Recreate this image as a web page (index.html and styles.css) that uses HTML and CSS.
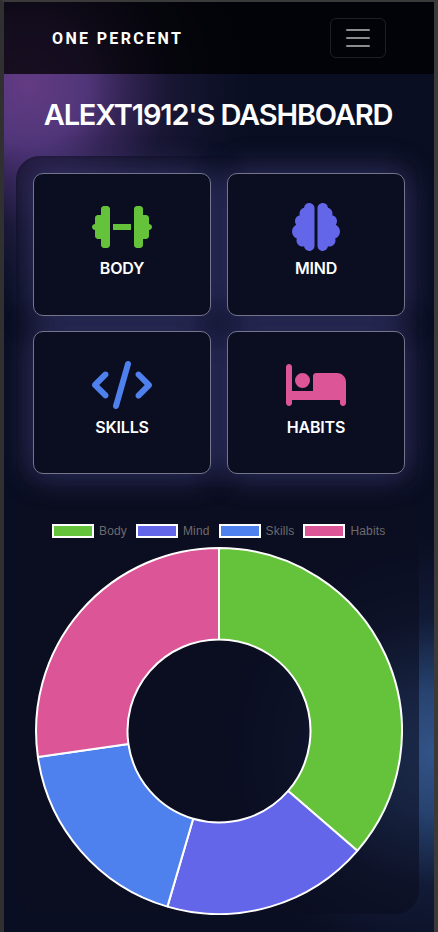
FILE: index.html
```html
<!DOCTYPE html>
<html lang="en">
<head>
<meta charset="utf-8">
<meta name="viewport" content="width=device-width, initial-scale=1">
<title>One Percent</title>
<link rel="stylesheet" href="styles.css">
</head>
<body>
<div class="app">
  <nav class="navbar">
    <a class="brand">ONE PERCENT</a>
    <button class="toggler" aria-label="Menu"><svg width="30" height="30" viewBox="0 0 30 30"><path d="M4 7h22M4 15h22M4 23h22" stroke="currentColor" stroke-width="2" stroke-linecap="round"/></svg></button>
  </nav>
  <h1 class="title">ALEXT1912'S DASHBOARD</h1>
  <section class="panel cards">
    <a class="card body"><svg class="icon" viewBox="0 0 640 512"><path d="M96 64c0-17.7 14.3-32 32-32h32c17.7 0 32 14.3 32 32V448c0 17.7-14.3 32-32 32H128c-17.7 0-32-14.3-32-32V384H64c-17.7 0-32-14.3-32-32V288c-17.700 0-32-14.300-32-32s14.300-32 32-32V160c0-17.700 14.300-32 32-32H96V64zm448 0v64h32c17.700 0 32 14.300 32 32v64c17.700 0 32 14.300 32 32s-14.300 32-32 32v64c0 17.700-14.300 32-32 32H544v64c0 17.700-14.300 32-32 32H480c-17.700 0-32-14.300-32-32V64c0-17.700 14.300-32 32-32h32c17.700 0 32 14.300 32 32zM416 224v64H224V224H416z"/></svg><span>BODY</span></a>
    <a class="card mind"><svg class="icon" viewBox="0 0 512 512"><path d="M184 0c30.900 0 56 25.100 56 56V456c0 30.900-25.100 56-56 56c-28.900 0-52.700-21.900-55.700-50.100c-5.200 1.400-10.700 2.100-16.300 2.100c-35.300 0-64-28.700-64-64c0-7.400 1.300-14.600 3.600-21.200C21.400 367.400 0 338.200 0 304c0-31.900 18.700-59.500 45.800-72.300C37.100 220.800 32 207 32 192c0-30.700 21.600-56.300 50.400-62.600C80.800 123.900 80 118 80 112c0-29.900 20.600-55.100 48.300-62.100C131.300 21.900 155.100 0 184 0zM328 0c28.900 0 52.600 21.900 55.700 49.900c27.800 7 48.300 32.100 48.300 62.100c0 6-.8 11.900-2.400 17.400c28.800 6.200 50.400 31.900 50.400 62.600c0 15-5.100 28.800-13.800 39.700C493.300 244.500 512 272.100 512 304c0 34.200-21.400 63.400-51.600 74.800c2.300 6.600 3.600 13.800 3.600 21.200c0 35.300-28.700 64-64 64c-5.600 0-11.100-.7-16.300-2.100c-3 28.200-26.800 50.100-55.700 50.100c-30.900 0-56-25.100-56-56V56c0-30.900 25.100-56 56-56z"/></svg><span>MIND</span></a>
    <a class="card skills"><svg class="icon" viewBox="0 0 640 512"><path d="M392.800 1.200c-17-4.900-34.700 5-39.600 22l-128 448c-4.900 17 5 34.700 22 39.600s34.700-5 39.600-22l128-448c4.900-17-5-34.700-22-39.600zm80.600 120.100c-12.500 12.500-12.500 32.800 0 45.300L562.700 256l-89.400 89.400c-12.500 12.500-12.500 32.800 0 45.300s32.800 12.500 45.300 0l112-112c12.500-12.500 12.500-32.800 0-45.300l-112-112c-12.500-12.500-32.800-12.500-45.300 0zm-306.700 0c-12.500-12.500-32.800-12.500-45.300 0l-112 112c-12.500 12.500-12.500 32.800 0 45.300l112 112c12.500 12.500 32.800 12.500 45.300 0s12.500-32.800 0-45.300L77.300 256l89.400-89.400c12.500-12.500 12.500-32.800 0-45.300z"/></svg><span>SKILLS</span></a>
    <a class="card habits"><svg class="icon" viewBox="0 0 640 512"><path d="M32 32c17.700 0 32 14.300 32 32V320H288V160c0-17.700 14.300-32 32-32H544c53 0 96 43 96 96V448c0 17.700-14.300 32-32 32s-32-14.300-32-32V416H64v32c0 17.700-14.300 32-32 32s-32-14.300-32-32V64C0 46.300 14.300 32 32 32zm144 96a80 80 0 1 1 0 160 80 80 0 1 1 0-160z"/></svg><span>HABITS</span></a>
  </section>
  <section class="panel chart">
    <ul class="legend">
      <li class="body"><i></i>Body</li>
      <li class="mind"><i></i>Mind</li>
      <li class="skills"><i></i>Skills</li>
      <li class="habits"><i></i>Habits</li>
    </ul>
    <svg class="donut" viewBox="-184 -184 368 368">
      <path class="body" d="M0-183A183 183 0 0 1 138.300 119.800L69.150 59.900A91.500 91.500 0 0 0 0-91.500Z"/>
      <path class="mind" d="M138.300 119.800A183 183 0 0 1-51.600 175.600L-25.800 87.800A91.500 91.500 0 0 0 69.150 59.900Z"/>
      <path class="skills" d="M-51.600 175.600A183 183 0 0 1-181.100 26L-90.600 13A91.500 91.500 0 0 0-25.800 87.800Z"/>
      <path class="habits" d="M-181.100 26A183 183 0 0 1 0-183V-91.500A91.500 91.500 0 0 0-90.600 13Z"/>
    </svg>
  </section>
</div>
</body>
</html>
```
FILE: styles.css
```css
* { box-sizing: border-box; }
body { margin: 0; font-family: Inter, sans-serif; color: #fff; }
.app {
  height: 932px;
  overflow: hidden;
  border: solid #3a3a3a;
  border-width: 2px 4px 0;
  border-left-color: #303030;
  background:
    radial-gradient(circle 225px at 24px 84px, rgba(108, 64, 142, .9), rgba(92, 60, 136, .86) 26%, rgba(66, 44, 102, .75) 42%, rgba(38, 30, 68, .55) 62%, rgba(18, 20, 46, .4) 85%, transparent),
    radial-gradient(ellipse 215px 215px at 430px 750px, rgba(54, 90, 145, .92), rgba(44, 76, 125, .85) 28%, rgba(25, 40, 75, .5) 62%, transparent),
    #0a0e22;
}
.navbar {
  display: flex;
  align-items: center;
  justify-content: space-between;
  height: 72px;
  padding: 0 48px;
  background: rgba(0, 0, 0, .75);
}
.brand { padding-top: 1px; font: 700 16px/24px Roboto, sans-serif; letter-spacing: 2.350px; }
.toggler {
  display: grid;
  place-items: center;
  width: 56px;
  height: 40px;
  padding: 0;
  border: 1px solid #1e1e23;
  border-radius: 6px;
  background: none;
  color: #8c8c8f;
}
.title {
  margin: 23px 0 0;
  padding-right: 2px;
  text-align: center;
  font-size: 29px;
  line-height: 36px;
  font-weight: 600;
  letter-spacing: -1.160px;
}
.panel { width: 403px; margin-left: 12px; border-radius: 24px; background: rgba(11, 13, 32, .6); }
.cards {
  display: grid;
  grid-template-columns: 178px 178px;
  grid-auto-rows: 143px;
  gap: 15px 16px;
  height: 334px;
  margin-top: 23px;
  padding: 17px 0 0 17px;
  box-shadow: inset 0 0 3px rgba(0, 0, 0, .35);
}
.card {
  display: flex;
  flex-direction: column;
  align-items: center;
  position: relative;
  padding-top: 29px;
  border: 1px solid #74748a;
  border-radius: 10px;
  background: #0b0e21;
}
.card::before {
  content: "";
  position: absolute;
  z-index: -1;
  inset: 0;
  border-radius: 10px;
  box-shadow: 0 0 30px 5px rgba(92, 92, 180, .42);
}
.cards { position: relative; z-index: 0; }
.icon { height: 48px; fill: currentColor; }
.card span { margin-top: 5px; color: #fff; font-size: 16px; line-height: 24px; font-weight: 600; letter-spacing: -.2px; }
.skills span, .habits span { margin-top: 6px; }
.body { color: #64c33a; fill: #64c33a; }
.mind { color: #6366e8; fill: #6366e8; }
.skills { color: #4e81ee; fill: #4e81ee; }
.habits { color: #db5597; fill: #db5597; }
.chart { height: 424px; padding-top: 33px; }
.legend {
  display: flex;
  gap: 9px;
  margin: 0 0 0 36px;
  padding: 0;
  list-style: none;
  font: 12px/16px "Liberation Sans", sans-serif;
  letter-spacing: .150px;
}
.legend li { display: flex; align-items: center; gap: 5px; color: #6c6c6c; }
.legend i { width: 42px; height: 14px; border: 2px solid #fff; }
.legend .body i { background: #64c33a; }
.legend .mind i { background: #6366e8; }
.legend .skills i { background: #4e81ee; }
.legend .habits i { background: #db5597; }
.donut { display: block; width: 368px; height: 368px; margin: 8px 0 0 19px; }
.donut path { stroke: #fff; stroke-width: 2; stroke-linejoin: bevel; }
```
